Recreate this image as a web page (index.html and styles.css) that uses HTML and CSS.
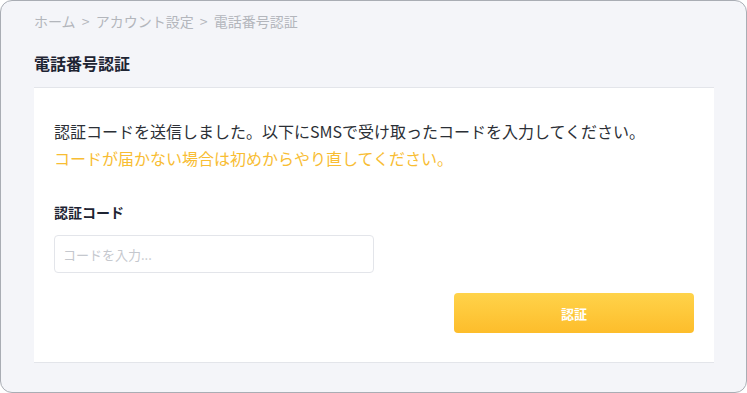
FILE: index.html
```html
<!DOCTYPE html>
<html lang="ja">
<head>
    <meta charset="UTF-8">
    <meta name="viewport" content="width=device-width, initial-scale=1.0">
    <title>電話番号認証</title>
    <link rel="stylesheet" href="styles.css">
</head>
<body>
    <div class="page">
        <div class="breadcrumb">
            <span>ホーム</span>
            <span class="sep">&gt;</span>
            <span>アカウント設定</span>
            <span class="sep">&gt;</span>
            <span>電話番号認証</span>
        </div>

        <h1 class="page-title">電話番号認証</h1>

        <div class="card">
            <p class="message">認証コードを送信しました。以下にSMSで受け取ったコードを入力してください。</p>
            <p class="message notice">コードが届かない場合は初めからやり直してください。</p>

            <form class="verify-form">
                <label for="code">認証コード</label>
                <input type="text" id="code" name="code" placeholder="コードを入力...">
                <div class="actions">
                    <button type="submit">認証</button>
                </div>
            </form>
        </div>
    </div>
</body>
</html>
```

FILE: styles.css
```css
* {
    box-sizing: border-box;
}
body {
    margin: 0;
    font-family: "Noto Sans CJK JP", "Noto Sans", sans-serif;
    background: #ffffff;
}
.page {
    width: 747px;
    height: 393px;
    border: 1px solid #a9adb4;
    border-radius: 12px;
    background: #f4f5f9;
    padding: 9px 32px 0 33px;
}
.breadcrumb {
    font-size: 14px;
    line-height: 22px;
    color: #b3b6bc;
}
.breadcrumb .sep {
    margin: 0 3px;
}
.page-title {
    margin: 20px 0 13px;
    font-size: 16px;
    line-height: 22px;
    font-weight: bold;
    color: #1e2433;
}
.card {
    background: white;
    border-top: 1px solid #e3e5ea;
    border-bottom: 1px solid #e3e5ea;
    padding: 30px 20px 29px;
}
.message {
    margin: 0;
    font-size: 16px;
    line-height: 27px;
    color: #2b2f36;
}
.notice {
    color: #f8bd33;
}
.verify-form {
    margin-top: 30px;
}
label {
    display: block;
    font-size: 14px;
    line-height: 20px;
    font-weight: bold;
    color: #1e2433;
    margin-bottom: 13px;
}
input[type="text"] {
    display: block;
    width: 320px;
    height: 38px;
    padding: 0 8px;
    border: 1px solid #e3e5ea;
    border-radius: 4px;
    font-family: inherit;
    font-size: 13px;
    color: #333;
}
input::placeholder {
    color: #c5c8ce;
}
.actions {
    display: flex;
    justify-content: flex-end;
    margin-top: 20px;
}
button {
    width: 240px;
    height: 40px;
    border: none;
    border-radius: 4px;
    background: linear-gradient(#ffd34a, #fdbd2b);
    color: white;
    font-family: inherit;
    font-size: 13px;
    font-weight: bold;
    cursor: pointer;
}
```
